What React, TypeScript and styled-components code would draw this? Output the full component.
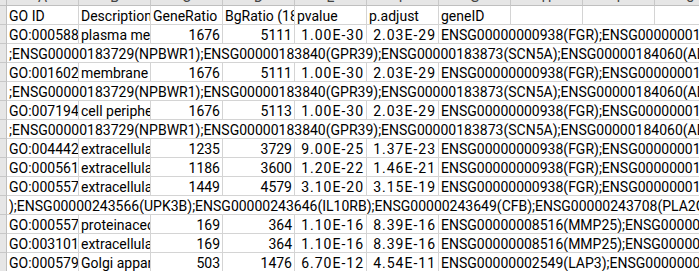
import React from "react";
import styled, { createGlobalStyle } from "styled-components";

const Global = createGlobalStyle`
  html, body { margin: 0; padding: 0; background: #fff; }
  body { font-family: Roboto, "Noto Sans CJK SC", sans-serif; }
`;

const Viewport = styled.div`
  width: 699px;
  height: 271px;
  overflow: hidden;
  background: #fff;
`;

const Sheet = styled.div`
  display: grid;
  grid-template-columns: 40px repeat(10, 72px);
  grid-auto-rows: 19px;
  margin: -13px 0 0 -33px;
  width: max-content;
  font-family: Roboto, "Noto Sans CJK SC", sans-serif;
  font-size: 14px;
  color: #000;
`;

const Corner = styled.div`
  box-sizing: border-box;
  background: #e6e6e6;
  border-right: 1px solid #bfbfbf;
  border-bottom: 1px solid #bfbfbf;
`;

const ColHead = styled.div`
  box-sizing: border-box;
  background: #e6e6e6;
  color: #444;
  text-align: center;
  line-height: 20px;
  border-right: 1px solid #c8c8c8;
  border-bottom: 1px solid #bfbfbf;
  overflow: hidden;
`;

const RowHead = styled.div`
  box-sizing: border-box;
  background: #e6e6e6;
  color: #444;
  text-align: center;
  line-height: 20px;
  border-right: 1px solid #bfbfbf;
  border-bottom: 1px solid #c8c8c8;
  overflow: hidden;
`;

const Cell = styled.div<{ $right?: boolean; $span?: number; $sci?: boolean }>`
  box-sizing: border-box;
  grid-column: span ${(p) => p.$span ?? 1};
  border-right: ${(p) => ((p.$span ?? 1) > 1 ? "none" : "1px solid #d4d4d4")};
  border-bottom: 1px solid #d4d4d4;
  overflow: hidden;
  white-space: nowrap;
  line-height: 20px;
  text-align: ${(p) => (p.$right ? "right" : "left")};
  padding: ${(p) => (p.$right ? "0 2px 0 0" : "0 0 0 2px")};
  letter-spacing: ${(p) => (p.$sci ? "1px" : "normal")};
`;

type GoRow = {
  id: string;
  desc: string;
  gene: number;
  bg: number;
  p: string;
  padj: string;
  genes: string;
};

type Row = { kind: "go"; data: GoRow } | { kind: "cont"; text: string };

const cont1 =
  ";ENSG00000183729(NPBWR1);ENSG00000183840(GPR39);ENSG00000183873(SCN5A);ENSG00000184060(ADAP2);ENSG00000184113(CLDN5)";
const fgr = "ENSG00000000938(FGR);ENSG00000001036(FUCA2);ENSG00000001084(GCLC)";

const rows: Row[] = [
  { kind: "go", data: { id: "GO:0005886", desc: "plasma membrane", gene: 1676, bg: 5111, p: "1.00E-30", padj: "2.03E-29", genes: fgr } },
  { kind: "cont", text: cont1 },
  { kind: "go", data: { id: "GO:0016020", desc: "membrane", gene: 1676, bg: 5111, p: "1.00E-30", padj: "2.03E-29", genes: fgr } },
  { kind: "cont", text: cont1 },
  { kind: "go", data: { id: "GO:0071944", desc: "cell periphery", gene: 1676, bg: 5113, p: "1.00E-30", padj: "2.03E-29", genes: fgr } },
  { kind: "cont", text: cont1 },
  { kind: "go", data: { id: "GO:0044421", desc: "extracellular region part", gene: 1235, bg: 3729, p: "9.00E-25", padj: "1.37E-23", genes: fgr } },
  { kind: "go", data: { id: "GO:0005615", desc: "extracellular space", gene: 1186, bg: 3600, p: "1.20E-22", padj: "1.46E-21", genes: fgr } },
  { kind: "go", data: { id: "GO:0005576", desc: "extracellular region", gene: 1449, bg: 4579, p: "3.10E-20", padj: "3.15E-19", genes: fgr } },
  {
    kind: "cont",
    text: ");ENSG00000243566(UPK3B);ENSG00000243646(IL10RB);ENSG00000243649(CFB);ENSG00000243708(PLA2G4B);ENSG00000244038(DDOST)",
  },
  { kind: "go", data: { id: "GO:0005578", desc: "proteinaceous extracellular matrix", gene: 169, bg: 364, p: "1.10E-16", padj: "8.39E-16", genes: "ENSG00000008516(MMP25);ENSG00000049089(COL9A2)" } },
  { kind: "go", data: { id: "GO:0031012", desc: "extracellular matrix", gene: 169, bg: 364, p: "1.10E-16", padj: "8.39E-16", genes: "ENSG00000008516(MMP25);ENSG00000049089(COL9A2)" } },
  { kind: "go", data: { id: "GO:0005794", desc: "Golgi apparatus", gene: 503, bg: 1476, p: "6.70E-12", padj: "4.54E-11", genes: "ENSG00000002549(LAP3);ENSG00000002586(CD99)" } },
];

const letters = ["A", "B", "C", "D", "E", "F", "G", "H", "I", "J"];

export default function App() {
  return (
    <>
      <Global />
      <Viewport>
        <Sheet>
          <Corner />
          {letters.map((l) => (
            <ColHead key={l}>{l}</ColHead>
          ))}

          <RowHead>1</RowHead>
          <Cell>GO ID</Cell>
          <Cell>Description</Cell>
          <Cell>GeneRatio</Cell>
          <Cell>BgRatio (18670)</Cell>
          <Cell>pvalue</Cell>
          <Cell>p.adjust</Cell>
          <Cell>geneID</Cell>
          <Cell />
          <Cell />
          <Cell />

          {rows.map((r, i) =>
            r.kind === "cont" ? (
              <React.Fragment key={i}>
                <RowHead>{i + 2}</RowHead>
                <Cell $span={10}>{r.text}</Cell>
              </React.Fragment>
            ) : (
              <React.Fragment key={i}>
                <RowHead>{i + 2}</RowHead>
                <Cell>{r.data.id}</Cell>
                <Cell>{r.data.desc}</Cell>
                <Cell $right>{r.data.gene}</Cell>
                <Cell $right>{r.data.bg}</Cell>
                <Cell $right $sci>{r.data.p}</Cell>
                <Cell $right $sci>{r.data.padj}</Cell>
                <Cell $span={4}>{r.data.genes}</Cell>
              </React.Fragment>
            )
          )}
        </Sheet>
      </Viewport>
    </>
  );
}
